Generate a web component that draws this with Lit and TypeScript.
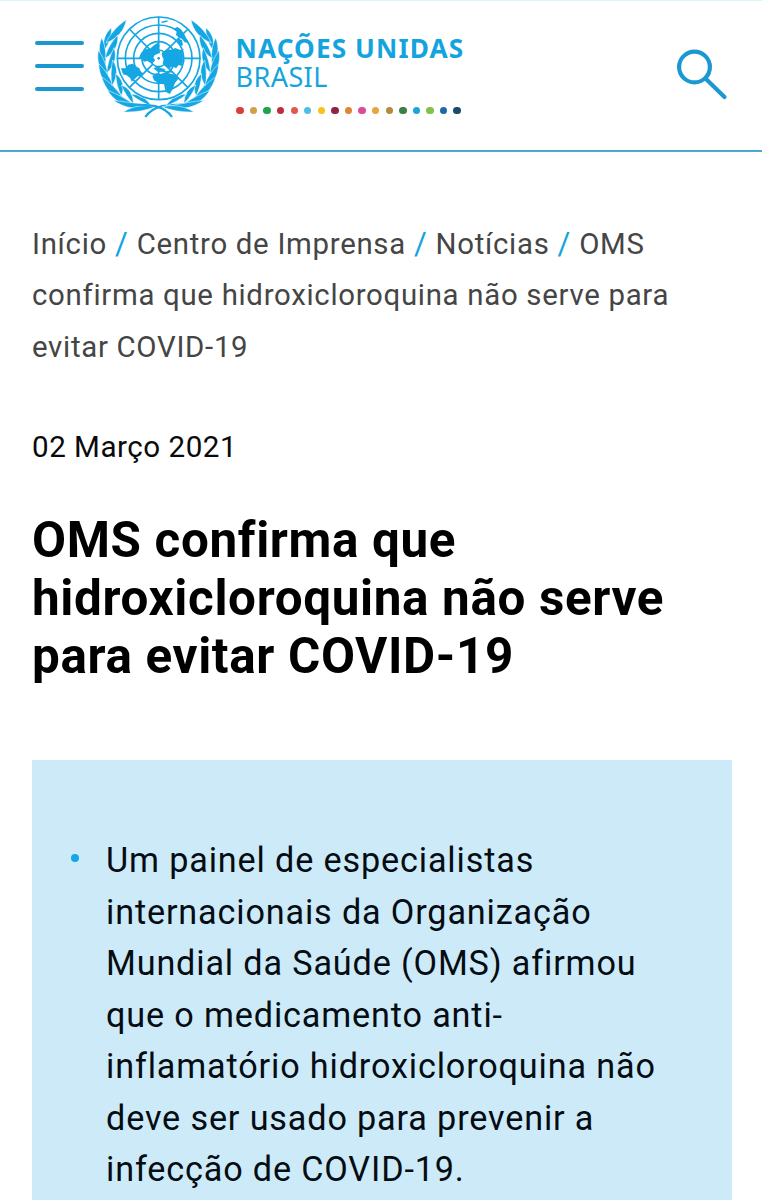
import { LitElement, html, css, svg } from "lit";
import { customElement } from "lit/decorators.js";

const SDG_COLORS = [
  "#d9403a", "#d3a04a", "#1fa44c", "#bf2a3d", "#e2574a", "#4fbde6", "#f7c11e", "#8f2347", "#e08434",
  "#dd4a9b", "#e9a441", "#b58b3a", "#3c7f48", "#1aa5da", "#84c04c", "#1a6aa8", "#1c4a6b",
];

// Laurel leaves of the left branch: [base x, base y, tip x, tip y, bend, width]
const LEAVES: number[][] = [
  [44, 134, 64, 68, 3, 11],
  [46, 180, 35, 98, 4, 12],
  [56, 222, 25, 136, 5, 13],
  [76, 256, 26, 176, 6, 13],
  [104, 286, 35, 216, 6, 13],
  [140, 304, 52, 256, 7, 12],
  [178, 304, 70, 286, 8, 10],
  [196, 305, 100, 321, -3, 10],
  [48, 114, 109, 44, -4, 13],
  [45, 160, 83, 90, -5, 12],
  [50, 204, 72, 128, -6, 11],
  [66, 242, 68, 165, -6, 11],
  [94, 273, 77, 206, -6, 11],
  [130, 296, 94, 240, -5, 10],
  [184, 303, 122, 268, -5, 9],
];

const leafPath = ([bx, by, tx, ty, bend, w]: number[]) => {
  const dx = tx - bx;
  const dy = ty - by;
  const len = Math.hypot(dx, dy);
  const nx = dy / len;
  const ny = -dx / len;
  const at = (t: number, o: number) =>
    `${(bx + dx * t + nx * o).toFixed(1)} ${(by + dy * t + ny * o).toFixed(1)}`;
  return `M${bx} ${by}C${at(0.3, bend + w)} ${at(0.65, bend + w)} ${tx} ${ty}C${at(0.7, bend - w)} ${at(0.35, bend - w)} ${bx} ${by}Z`;
};

@customElement("un-emblem")
class UnEmblem extends LitElement {
  static styles = css`
    :host { display: block; width: 140px; height: 125px; }
    svg { display: block; width: 100%; height: 100%; }
    .line { fill: none; stroke: #14a7e4; stroke-width: 5; }
    .thin { fill: none; stroke: #14a7e4; stroke-width: 5; }
    .land { fill: #14a7e4; }
    .leaf { fill: #14a7e4; stroke: #fff; stroke-width: 1.6; }
    .sea { fill: #fff; }
    .ribbon { fill: none; stroke: #14a7e4; stroke-width: 6.5; }
  `;
  render() {
    const branch = svg`
      ${LEAVES.map((l) => svg`<path class="leaf" d=${leafPath(l)} />`)}
      <path class="ribbon" d="M166 336C178 318 194 309 214 304C236 299 262 300 290 297" />`;
    return html`<svg viewBox="0 0 420 375" aria-label="ONU">
      <g>${branch}</g>
      <g transform="translate(412 0) scale(-1 1)">${branch}</g>
      <circle class="sea" cx="206" cy="160" r="129" />
      <circle class="line" cx="206" cy="160" r="124" />
      <circle class="thin" cx="206" cy="160" r="100" />
      <circle class="thin" cx="206" cy="160" r="75" />
      <circle class="thin" cx="206" cy="160" r="50" />
      <circle class="thin" cx="206" cy="160" r="25" />
      <path class="line" d="M206 35V135M206 185V285M81 160H181M231 160H331M118 72L188 142M294 72L224 142M118 248L188 178M294 248L224 178" />
      <path class="land" d="M250 71L262 66L272 72L281 84L287 96L293 113L284 112L277 103L266 97L258 90L260 80ZM213 50L232 46L233 50L216 54ZM262 98L276 106L279 120L272 124L264 112Z" />
      <path class="land" d="M147 158L153 144L166 133L180 131L190 122L205 112L209 124L203 132L211 140L207 148L194 150L190 158L196 166L186 176L178 172L172 168L162 170L156 162Z" />
      <path class="land" d="M216 143L230 133L246 134L256 129L271 135L281 131L277 144L280 152L276 162L285 168L276 174L278 184L266 180L258 190L248 184L238 190L226 184L218 175L221 162L214 154Z" />
      <path class="land" d="M93 190L106 190L115 179L128 176L138 184L148 190L152 199L161 206L152 213L143 214L134 222L125 230L121 220L110 211L99 208Z" />
      <path class="land" d="M187 213L200 204L213 208L226 202L242 206L256 209L265 222L255 234L249 249L240 267L229 262L225 252L222 238L208 236L192 226Z" />
      <path class="land" d="M190 190L204 184L214 190L226 192L240 196L248 202L232 204L216 200L204 201Z" />
      <path class="sea" d="M197 150L206 145L216 150L218 160L213 168L217 174L208 176L202 169L196 167L193 158ZM222 194L232 191L238 197L228 199Z" />
      <circle class="land" cx="206" cy="160" r="4" />
    </svg>`;
  }
}

@customElement("site-header")
class SiteHeader extends LitElement {
  static styles = css`
    :host { display: block; }
    .bar {
      box-sizing: border-box; height: 152px; display: flex; align-items: flex-start;
      border-top: 1px solid #d5f5fa; border-bottom: 2px solid #4ba9cd; padding: 0 34px 0 35px;
    }
    .menu { display: flex; flex-direction: column; gap: 18.6px; width: 49px; padding-top: 40px; }
    .stroke { height: 4.2px; border-radius: 3px; background: #1b98d0; }
    .emblem { margin: 4px 0 0 6px; }
    .brand { padding: 33px 0 0 5.6px; font-family: "Noto Sans", sans-serif; color: #14a4dd; white-space: nowrap; }
    .name { font-size: 26.2px; font-weight: 700; letter-spacing: 1.1px; line-height: 29px; }
    .country { font-size: 27px; font-weight: 400; letter-spacing: 0.4px; line-height: 27px; }
    .dots { display: flex; gap: 6.2px; margin: 17px 0 0 0.6px; }
    .dot { width: 7.4px; height: 7.4px; border-radius: 50%; }
    .search { margin: 48px 0 0 auto; width: 52px; height: 52px; }
    .search path, .search circle { fill: none; stroke: #1b98d0; stroke-width: 4.2; stroke-linecap: round; }
  `;
  render() {
    return html`<header class="bar">
      <div class="menu"><div class="stroke"></div><div class="stroke"></div><div class="stroke"></div></div>
      <un-emblem class="emblem"></un-emblem>
      <div class="brand">
        <div class="name">NAÇÕES UNIDAS</div>
        <div class="country">BRASIL</div>
        <div class="dots">${SDG_COLORS.map((c) => html`<span class="dot" style="background:${c}"></span>`)}</div>
      </div>
      <svg class="search" viewBox="0 0 52 52">
        <circle cx="18.5" cy="18" r="15.4" />
        <path d="M30 30L48.5 48" />
      </svg>
    </header>`;
  }
}

@customElement("app-root")
class AppRoot extends LitElement {
  static styles = css`
    :host {
      display: block; height: 1200px; overflow: hidden; background: #fff;
      font-family: Roboto, "Liberation Sans", sans-serif; color: #0a0a0a;
    }
    .content { padding: 66.7px 30px 0 32px; }
    .crumbs { font-size: 29.4px; letter-spacing: 0.7px; line-height: 51.5px; color: #454545; }
    .slash { color: #14a4dd; font-size: 31px; line-height: 1; margin: 0 0.1px; }
    .date { margin-top: 47.8px; font-size: 29.6px; letter-spacing: 0.5px; line-height: 52px; color: #0a0a0a; }
    .title { margin: 38.2px 0 0; font-size: 49.4px; font-weight: 700; letter-spacing: 0.65px; line-height: 58px; color: #000; }
    .summary {
      box-sizing: border-box; margin: 74.8px 0 0; padding: 75.5px 60px 60px 39px; min-height: 520px;
      list-style: none; background: #cdeaf9;
    }
    .item { display: flex; gap: 27px; font-size: 34.2px; letter-spacing: 0.85px; line-height: 51.5px; color: #050c12; }
    .bullet { flex: none; width: 8px; height: 8px; margin-top: 19px; border-radius: 50%; background: #14a7e4; }
  `;
  render() {
    const slash = html`<span class="slash">/</span>`;
    return html`<site-header></site-header>
      <main class="content">
        <nav class="crumbs">
          Início ${slash} Centro de Imprensa ${slash} Notícias ${slash} OMS<br />confirma que hidroxicloroquina não serve para<br />evitar COVID-19
        </nav>
        <div class="date">02 Março 2021</div>
        <h1 class="title">OMS confirma que<br />hidroxicloroquina não serve<br />para evitar COVID-19</h1>
        <ul class="summary">
          <li class="item">
            <span class="bullet"></span>
            <span>Um painel de especialistas<br />internacionais da Organização<br />Mundial da Saúde (OMS) afirmou<br />que o medicamento anti-<br />inflamatório hidroxicloroquina não<br />deve ser usado para prevenir a<br />infecção de COVID-19.</span>
          </li>
        </ul>
      </main>`;
  }
}
